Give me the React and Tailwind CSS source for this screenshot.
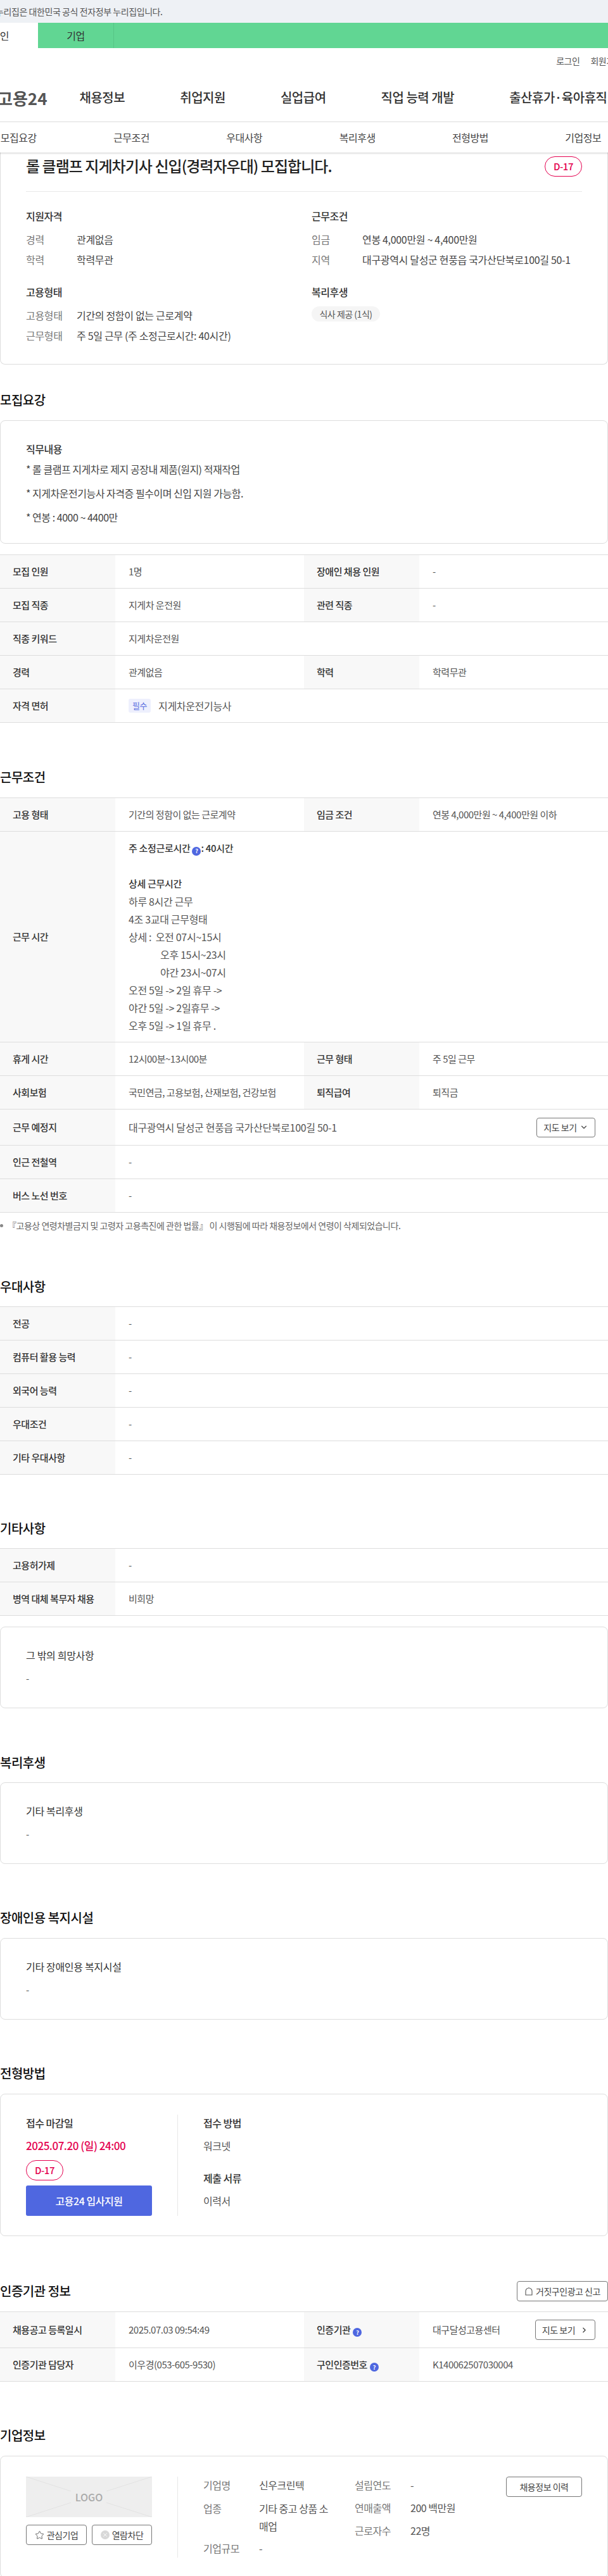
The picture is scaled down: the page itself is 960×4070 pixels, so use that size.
import React from "react";
import { ChevronDown, ChevronRight, Star, X } from "lucide-react";

const Heading = ({ children, right }) => (
  <div className="flex h-8 items-center justify-between">
    <h2 className="text-[20px] font-medium leading-8 text-[#111]">{children}</h2>
    {right}
  </div>
);

const Help = () => (
  <span className="inline-flex h-[14px] w-[14px] items-center justify-center rounded-full bg-[#4f67e0] align-[-2px] text-[9px] font-bold leading-none text-white">
    ?
  </span>
);

const Label = ({ children }) => (
  <div className="flex w-[182px] shrink-0 items-center bg-[#f8f8f8] pl-5 text-[15px] font-medium text-[#333]">
    {children}
  </div>
);

const Value = ({ children, className }) => (
  <div className={`flex items-center pl-[21px] text-[15px] text-[#555] ${className || "flex-1"}`}>{children}</div>
);

const Row = ({ items, h = "h-[53px]" }) => (
  <div className={`flex border-b border-[#ddd] ${h}`}>
    <Label>{items[0]}</Label>
    {items.length > 2 ? (
      <>
        <Value className="w-[298px] shrink-0">{items[1]}</Value>
        <Label>{items[2]}</Label>
        <Value>{items[3]}</Value>
      </>
    ) : (
      <Value>{items[1]}</Value>
    )}
  </div>
);

const Table = ({ children }) => <div className="border-t border-[#ddd]">{children}</div>;

const Card = ({ children, className }) => (
  <div className={`rounded-lg border border-[#ddd] ${className || ""}`}>{children}</div>
);

const NoteCard = ({ title }) => (
  <Card className="h-[129px] px-10 pt-[33px]">
    <div className="text-[16px] leading-[22px] tracking-[-0.02em] text-[#333]">{title}</div>
    <div className="mt-[14px] text-[15px] leading-6 text-[#555]">-</div>
  </Card>
);

const Pill = ({ className }) => (
  <div className={`flex h-[32px] w-[59px] items-center justify-center rounded-[16px] border border-[#e4004f] text-[15px] font-medium text-[#e4004f] ${className || ""}`}>
    D-17
  </div>
);

const OutlineButton = ({ children, className }) => (
  <div className={`flex items-center justify-center rounded-[4px] border border-[#777] text-[14px] text-[#444] ${className || ""}`}>
    {children}
  </div>
);

const Summary = ({ label, value, top }) => (
  <div className={`flex items-center text-[16px] tracking-[-0.02em] ${top || ""}`}>
    <div className="w-20 text-[#777]">{label}</div>
    <div className="text-[#444]">{value}</div>
  </div>
);

const SubTitle = ({ children, top }) => (
  <div className={`text-[16px] font-medium leading-6 text-[#333] ${top}`}>{children}</div>
);

const App = () => {
  return (
    <div className="w-[960px] overflow-hidden bg-white font-['Noto_Sans_CJK_KR',sans-serif] tracking-[-0.03em]">
      <div className="flex h-9 items-center whitespace-nowrap bg-[#eef1f5] text-[14px] tracking-[-0.03em] text-[#555]">
        <span className="-ml-[7px]">누리집은 대한민국 공식 전자정부 누리집입니다.</span>
      </div>
      <div className="flex h-10 bg-[#61d693] text-[16px] text-[#333]">
        <div className="flex w-[60px] items-center justify-end bg-white pr-[46px]">인</div>
        <div className="flex w-[120px] items-center justify-center border-r border-[#56c585]">기업</div>
      </div>

      <div className="flex h-[40px] items-center justify-end whitespace-nowrap text-[14px] text-[#555]">
        <span>로그인</span>
        <span className="ml-[17px] -mr-[22px]">회원가입</span>
      </div>

      <div className="flex h-[77px] items-center whitespace-nowrap border-b border-[#e5e5e5] text-[20px] font-medium text-[#333]">
        <span className="-ml-[4px] text-[26px] font-bold tracking-normal text-[#555]">고용24</span>
        <span className="ml-[51px]">채용정보</span>
        <span className="ml-[87px]">취업지원</span>
        <span className="ml-[87px]">실업급여</span>
        <span className="ml-[87px]">직업 능력 개발</span>
        <span className="ml-[87px]">출산휴가·육아휴직</span>
      </div>

      <div className="relative z-10 -ml-[60px] grid h-[48px] w-[1070px] grid-cols-6 items-center bg-white text-center text-[16px] text-[#444] shadow-[0_1px_3px_rgba(0,0,0,0.2)]">
        <span>모집요강</span>
        <span>근무조건</span>
        <span>우대사항</span>
        <span>복리후생</span>
        <span>전형방법</span>
        <span>기업정보</span>
      </div>

      <div className="h-[335px] rounded-b-lg border border-t-0 border-[#ddd] px-10">
        <div className="flex h-[62px] justify-between border-b border-[#e8e8e8]">
          <h1 className="pt-[4px] text-[24px] font-medium leading-[34px] tracking-[-0.04em] text-[#222]">
            롤 클램프 지게차기사 신입(경력자우대) 모집합니다.
          </h1>
          <Pill className="mt-[6px]" />
        </div>
        <div className="flex">
          <div className="w-[451px]">
            <SubTitle top="mt-[26px]">지원자격</SubTitle>
            <Summary label="경력" value="관계없음" top="mt-[13px] h-6" />
            <Summary label="학력" value="학력무관" top="mt-2 h-6" />
            <SubTitle top="mt-[27px]">고용형태</SubTitle>
            <Summary label="고용형태" value="기간의 정함이 없는 근로계약" top="mt-[13px] h-6" />
            <Summary label="근무형태" value="주 5일 근무 (주 소정근로시간: 40시간)" top="mt-2 h-6" />
          </div>
          <div>
            <SubTitle top="mt-[26px]">근무조건</SubTitle>
            <Summary label="임금" value="연봉 4,000만원 ~ 4,400만원" top="mt-[13px] h-6" />
            <Summary label="지역" value="대구광역시 달성군 현풍읍 국가산단북로100길 50-1" top="mt-2 h-6" />
            <SubTitle top="mt-[27px]">복리후생</SubTitle>
            <div className="mt-[11px] flex h-6 w-[108px] items-center justify-center rounded-full bg-[#f5f5f5] text-[14px] text-[#555]">
              식사 제공 (1식)
            </div>
          </div>
        </div>
      </div>

      <div className="mt-10 mb-4">
        <Heading>모집요강</Heading>
      </div>
      <Card className="h-[195px] px-10 pt-[32px] text-[16px] text-[#444]">
        <div className="font-medium leading-6 text-[#333]">직무내용</div>
        <div className="mt-2 leading-6">* 롤 클램프 지게차로 제지 공장내 제품(원지) 적재작업</div>
        <div className="mt-[14px] leading-6">* 지게차운전기능사 자격증 필수이며 신입 지원 가능함.</div>
        <div className="mt-[14px] leading-6">* 연봉 : 4000 ~ 4400만</div>
      </Card>
      <div className="mt-[17px]">
        <Table>
          <Row items={["모집 인원", "1명", "장애인 채용 인원", "-"]} />
          <Row items={["모집 직종", "지게차 운전원", "관련 직종", "-"]} />
          <Row items={["직종 키워드", "지게차운전원"]} />
          <Row items={["경력", "관계없음", "학력", "학력무관"]} />
          <Row
            items={[
              "자격 면허",
              <>
                <span className="mr-3 flex h-[22px] w-[35px] items-center justify-center rounded-[3px] bg-[#eef0fd] text-[13px] text-[#5a6ee0]">
                  필수
                </span>
                <span className="text-[16px] tracking-[-0.02em]">지게차운전기능사</span>
              </>,
            ]}
          />
        </Table>
      </div>

      <div className="mt-[70px] mb-4">
        <Heading>근무조건</Heading>
      </div>
      <Table>
        <Row items={["고용 형태", "기간의 정함이 없는 근로계약", "임금 조건", "연봉 4,000만원 ~ 4,400만원 이하"]} />
        <div className="flex h-[333px] border-b border-[#ddd]">
          <Label>근무 시간</Label>
          <div className="pl-[21px] pt-3 text-[16px] leading-7 tracking-[-0.02em] text-[#555]">
            <div className="text-[15px] font-medium text-[#333]">
              주 소정근로시간 <Help />: 40시간
            </div>
            <div className="h-7" />
            <div className="text-[15px] font-medium text-[#333]">상세 근무시간</div>
            <div>하루 8시간 근무</div>
            <div>4조 3교대 근무형태</div>
            <div>상세 :&nbsp; 오전 07시~15시</div>
            <div className="pl-[50px]">오후 15시~23시</div>
            <div className="pl-[50px]">야간 23시~07시</div>
            <div>오전 5일 -&gt; 2일 휴무 -&gt;</div>
            <div>야간 5일 -&gt; 2일휴무 -&gt;</div>
            <div>오후 5일 -&gt; 1일 휴무 .</div>
          </div>
        </div>
        <Row items={["휴게 시간", "12시00분~13시00분", "근무 형태", "주 5일 근무"]} />
        <Row items={["사회보험", "국민연금, 고용보험, 산재보험, 건강보험", "퇴직급여", "퇴직금"]} />
        <div className="flex h-[57px] border-b border-[#ddd]">
          <Label>근무 예정지</Label>
          <Value className="flex-1 justify-between pr-5">
            <span className="text-[16px] tracking-[-0.02em]">대구광역시 달성군 현풍읍 국가산단북로100길 50-1</span>
            <OutlineButton className="h-[31px] w-[93px] gap-1">
              지도 보기
              <ChevronDown size={14} />
            </OutlineButton>
          </Value>
        </div>
        <Row items={["인근 전철역", "-"]} />
        <Row items={["버스 노선 번호", "-"]} />
      </Table>
      <div className="mt-[10px] flex h-5 items-center whitespace-nowrap text-[14px] text-[#666]">
        <span className="mr-[7px] h-[5px] w-[5px] rounded-full bg-[#888]" />
        『고용상 연령차별금지 및 고령자 고용촉진에 관한 법률』 이 시행됨에 따라 채용정보에서 연령이 삭제되었습니다.
      </div>

      <div className="mt-[71px] mb-[15px]">
        <Heading>우대사항</Heading>
      </div>
      <Table>
        <Row items={["전공", "-"]} />
        <Row items={["컴퓨터 활용 능력", "-"]} />
        <Row items={["외국어 능력", "-"]} />
        <Row items={["우대조건", "-"]} />
        <Row items={["기타 우대사항", "-"]} />
      </Table>

      <div className="mt-[69px] mb-[15px]">
        <Heading>기타사항</Heading>
      </div>
      <Table>
        <Row items={["고용허가제", "-"]} />
        <Row items={["병역 대체 복무자 채용", "비희망"]} />
      </Table>
      <div className="mt-[17px]">
        <NoteCard title="그 밖의 희망사항" />
      </div>

      <div className="mt-[70px] mb-[15px]">
        <Heading>복리후생</Heading>
      </div>
      <NoteCard title="기타 복리후생" />

      <div className="mt-[69px] mb-4">
        <Heading>장애인용 복지시설</Heading>
      </div>
      <NoteCard title="기타 장애인용 복지시설" />

      <div className="mt-[69px] mb-4">
        <Heading>전형방법</Heading>
      </div>
      <Card className="flex h-[225px] px-10 pt-[32px]">
        <div className="h-[160px] w-[240px] border-r border-[#e8e8e8]">
          <div className="text-[16px] font-medium leading-[26px] text-[#333]">접수 마감일</div>
          <div className="mt-[10px] text-[17px] font-medium leading-[26px] text-[#e4004f]">2025.07.20 (일) 24:00</div>
          <Pill className="mt-[10px]" />
          <div className="mt-2 flex h-12 w-[199px] items-center justify-center rounded-[3px] bg-[#4f67e0] text-[16px] font-medium text-white">
            고용24 입사지원
          </div>
        </div>
        <div className="pl-10">
          <div className="text-[16px] font-medium leading-[26px] text-[#333]">접수 방법</div>
          <div className="mt-[10px] text-[16px] leading-[26px] text-[#555]">워크넷</div>
          <div className="mt-[25px] text-[16px] font-medium leading-[26px] text-[#333]">제출 서류</div>
          <div className="mt-[10px] text-[16px] leading-[26px] text-[#555]">이력서</div>
        </div>
      </Card>

      <div className="mt-[71px] mb-4">
        <Heading
          right={
            <OutlineButton className="h-8 w-[144px] gap-1">
              <svg width="14" height="15" viewBox="0 0 14 15" fill="none" stroke="#555" strokeWidth="1.1">
                <path d="M2 13V7a5 5 0 0 1 10 0v6zM7 2V1" />
              </svg>
              거짓구인광고 신고
            </OutlineButton>
          }
        >
          인증기관 정보
        </Heading>
      </div>
      <Table>
        <div className="flex h-[57px] border-b border-[#ddd]">
          <Label>채용공고 등록일시</Label>
          <Value className="w-[298px] shrink-0">2025.07.03 09:54:49</Value>
          <Label>
            인증기관 <span className="ml-1"><Help /></span>
          </Label>
          <Value className="flex-1 justify-between pr-5">
            대구달성고용센터
            <OutlineButton className="h-[32px] w-[95px] gap-2">
              지도 보기
              <ChevronRight size={13} strokeWidth={2.5} />
            </OutlineButton>
          </Value>
        </div>
        <Row
          items={[
            "인증기관 담당자",
            "이우경(053-605-9530)",
            <>
              구인인증번호 <span className="ml-1"><Help /></span>
            </>,
            "K140062507030004",
          ]}
        />
      </Table>

      <div className="mt-[69px] mb-[16px]">
        <Heading>기업정보</Heading>
      </div>
      <Card className="flex h-[193px] px-10 pt-[32px] text-[16px]">
        <div className="h-[128px] w-[240px] border-r border-[#e8e8e8]">
          <div className="relative h-16 w-[199px] bg-[#eee]">
            <svg className="absolute inset-0" width="199" height="64" viewBox="0 0 199 64" stroke="#e2e2e2" fill="none">
              <path d="M0 0L71 23M199 0L127 23M0 64L71 41M199 64L127 41" />
            </svg>
            <span className="absolute inset-0 flex items-center justify-center text-[16px] font-medium tracking-normal text-[#aaa]">LOGO</span>
          </div>
          <div className="mt-3 flex w-[199px] justify-between">
            <OutlineButton className="h-8 w-[96px] gap-1">
              <Star size={15} strokeWidth={1.3} />
              관심기업
            </OutlineButton>
            <OutlineButton className="h-8 w-[95px] gap-1">
              <span className="flex h-[14px] w-[14px] items-center justify-center rounded-full bg-[#d8d8d8] text-white">
                <X size={10} />
              </span>
              열람차단
            </OutlineButton>
          </div>
        </div>
        <div className="grid w-[279px] grid-cols-[88px_1fr] content-start pl-10 text-[#555]">
          <div className="h-9 leading-[26px] text-[#777]">기업명</div>
          <div className="leading-[26px]">신우크린텍</div>
          <div className="leading-7 text-[#777]">업종</div>
          <div className="mb-2 whitespace-nowrap leading-7">
            기타 중고 상품 소<br />매업
          </div>
          <div className="leading-[26px] text-[#777]">기업규모</div>
          <div className="leading-[26px]">-</div>
        </div>
        <div className="grid grid-cols-[88px_1fr] content-start auto-rows-[36px] text-[#555]">
          <div className="leading-[26px] text-[#777]">설립연도</div>
          <div className="leading-[26px]">-</div>
          <div className="leading-[26px] text-[#777]">연매출액</div>
          <div className="leading-[26px]">200 백만원</div>
          <div className="leading-[26px] text-[#777]">근로자수</div>
          <div className="leading-[26px]">22명</div>
        </div>
        <OutlineButton className="ml-auto h-8 w-[120px]">채용정보 이력</OutlineButton>
      </Card>
    </div>
  );
};

export default App;
